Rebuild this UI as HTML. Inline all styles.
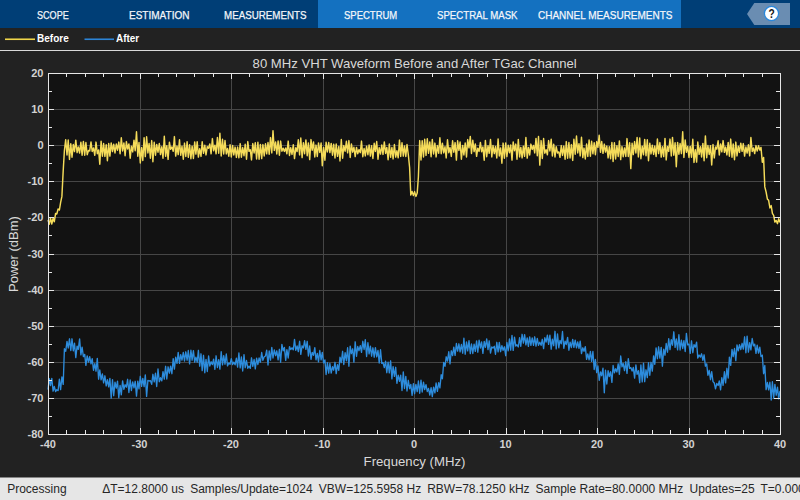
<!DOCTYPE html>
<html><head><meta charset="utf-8"><style>
html,body{margin:0;padding:0;}
body{width:800px;height:500px;overflow:hidden;position:relative;background:#222222;font-family:"Liberation Sans",sans-serif;}
.tb{position:absolute;left:0;top:0;width:800px;height:28px;background:#003e76;}
.sel{position:absolute;left:318px;top:0;width:363px;height:28px;background:#1471c0;}
.tab{position:absolute;top:8px;font-size:11px;line-height:14px;color:#f4f6fa;-webkit-text-stroke:0.25px #f4f6fa;white-space:nowrap;transform-origin:0 0;}
.leg{position:absolute;top:31px;font-size:11px;font-weight:bold;line-height:14px;color:#ffffff;white-space:nowrap;transform-origin:0 0;}
.status{position:absolute;left:0;top:477px;width:800px;height:22px;border-top:1px solid #858585;background:#e6e6e6;font-size:12px;color:#262626;white-space:pre;}
.status span{position:absolute;top:4px;line-height:14px;}
svg{position:absolute;left:0;top:0;}
</style></head><body>
<div class="tb"></div><div class="sel"></div>
<div class="tab" style="left:37px;transform:scaleX(0.824)">SCOPE</div>
<div class="tab" style="left:128.75px;transform:scaleX(0.911)">ESTIMATION</div>
<div class="tab" style="left:223.75px;transform:scaleX(0.888)">MEASUREMENTS</div>
<div class="tab" style="left:344.25px;transform:scaleX(0.863)">SPECTRUM</div>
<div class="tab" style="left:437px;transform:scaleX(0.876)">SPECTRAL MASK</div>
<div class="tab" style="left:538px;transform:scaleX(0.908)">CHANNEL MEASUREMENTS</div>

<svg width="800" height="28" viewBox="0 0 800 28">
<path d="M747 14L754.3 3H790V25H754.3Z" fill="#6a8db2"/>
<circle cx="771.5" cy="13.5" r="7.1" fill="#ffffff" stroke="#2a88dc" stroke-width="1.3"/>
<text x="771.6" y="17.8" text-anchor="middle" font-family="Liberation Sans" font-weight="bold" font-size="12" fill="#151515" transform="translate(771.6,0) scale(0.85,1) translate(-771.6,0)">?</text>
</svg>
<svg width="800" height="50" viewBox="0 0 800 50">
<path d="M5 39.25H35" stroke="#f0d64a" stroke-width="1.6"/>
<path d="M84.5 39.25H114" stroke="#2c84d6" stroke-width="1.6"/>
</svg>
<div class="leg" style="left:37px;transform:scaleX(0.91)">Before</div>
<div class="leg" style="left:116.25px;transform:scaleX(0.90)">After</div>
<div style="position:absolute;left:0;top:50px;width:800px;height:1px;background:#d9d9d9"></div>
<svg width="800" height="477" viewBox="0 0 800 477" style="top:0">
<rect x="48.5" y="73.5" width="732" height="361" fill="#121212"/>
<path d="M140.5 73V434M231.5 73V434M323.5 73V434M414.5 73V434M506.5 73V434M597.5 73V434M689.5 73V434M48 109.5H780M48 145.5H780M48 181.5H780M48 217.5H780M48 254.5H780M48 290.5H780M48 326.5H780M48 362.5H780M48 398.5H780" stroke="#464646" stroke-width="1" fill="none"/>
<path d="M48.0 220.1L49.3 224.2L50.5 217.9L51.8 224.0L53.1 218.3L54.3 221.7L55.6 213.4L56.8 214.0L58.1 209.0L59.4 210.0L60.6 202.6L61.9 196.4L63.2 170.7L64.4 150.5L65.7 139.7L67.0 155.0L68.2 140.0L69.5 159.4L70.8 143.8L72.0 157.2L73.3 144.5L74.5 151.6L75.8 140.2L77.1 152.6L78.3 146.9L79.6 153.0L80.9 142.2L82.1 155.3L83.4 141.4L84.7 155.2L85.9 142.5L87.2 154.7L88.5 150.5L89.7 150.9L91.0 141.9L92.2 151.5L93.5 147.9L94.8 155.3L96.0 142.1L97.3 153.7L98.6 149.9L99.8 164.2L101.1 141.3L102.4 156.3L103.6 143.5L104.9 156.4L106.2 144.8L107.4 160.8L108.7 143.5L109.9 156.1L111.2 142.9L112.5 151.6L113.7 144.2L115.0 153.0L116.3 144.0L117.5 150.2L118.8 142.1L120.1 153.7L121.3 137.7L122.6 151.0L123.9 142.9L125.1 155.7L126.4 141.6L127.6 149.0L128.9 143.9L130.2 158.2L131.4 146.2L132.7 151.9L134.0 140.2L135.2 150.7L136.5 131.8L137.8 156.3L139.0 142.5L140.3 163.0L141.6 147.6L142.8 160.5L144.1 137.8L145.3 156.6L146.6 136.7L147.9 152.9L149.1 143.5L150.4 158.3L151.7 140.6L152.9 161.7L154.2 142.3L155.5 155.2L156.7 144.4L158.0 152.2L159.3 143.5L160.5 154.6L161.8 146.8L163.0 158.2L164.3 136.3L165.6 156.3L166.8 145.7L168.1 159.4L169.4 142.2L170.6 149.3L171.9 146.9L173.2 151.3L174.4 136.6L175.7 156.1L177.0 146.1L178.2 154.6L179.5 139.7L180.7 155.3L182.0 146.3L183.3 159.2L184.5 143.1L185.8 156.4L187.1 141.8L188.3 157.3L189.6 144.8L190.9 158.7L192.1 146.2L193.4 158.5L194.7 141.9L195.9 154.1L197.2 141.7L198.4 157.1L199.7 148.8L201.0 156.4L202.2 141.8L203.5 153.3L204.8 145.3L206.0 154.9L207.3 146.6L208.6 148.2L209.8 143.9L211.1 153.8L212.4 138.6L213.6 150.8L214.9 145.2L216.1 153.8L217.4 137.5L218.7 153.2L219.9 133.3L221.2 156.0L222.5 139.2L223.7 154.0L225.0 140.5L226.3 153.9L227.5 148.5L228.8 156.2L230.1 144.7L231.3 157.0L232.6 145.4L233.8 155.0L235.1 147.1L236.4 157.4L237.6 147.1L238.9 157.8L240.2 143.6L241.4 157.2L242.7 147.6L244.0 155.7L245.2 144.3L246.5 159.2L247.8 141.6L249.0 151.3L250.3 149.7L251.5 159.9L252.8 143.6L254.1 153.0L255.3 142.7L256.6 159.0L257.9 142.2L259.1 159.3L260.4 144.4L261.7 158.6L262.9 144.6L264.2 156.0L265.5 143.8L266.7 153.8L268.0 142.5L269.2 154.2L270.5 137.6L271.8 152.9L273.0 130.8L274.3 150.4L275.6 142.0L276.8 154.0L278.1 140.9L279.4 155.2L280.6 141.1L281.9 151.2L283.2 148.2L284.4 151.4L285.7 147.9L286.9 153.8L288.2 141.1L289.5 155.5L290.7 147.7L292.0 154.4L293.3 144.7L294.5 158.6L295.8 147.8L297.1 151.5L298.3 139.8L299.6 154.9L300.8 138.0L302.1 157.6L303.4 142.7L304.6 153.7L305.9 139.9L307.2 155.7L308.4 142.9L309.7 159.6L311.0 139.6L312.2 150.2L313.5 141.9L314.8 157.0L316.0 145.1L317.3 156.5L318.5 142.9L319.8 152.4L321.1 143.0L322.3 165.7L323.6 147.4L324.9 160.2L326.1 142.3L327.4 151.9L328.7 142.5L329.9 152.6L331.2 143.4L332.5 155.2L333.7 144.2L335.0 158.0L336.2 144.0L337.5 156.3L338.8 146.5L340.0 160.9L341.3 139.5L342.6 158.2L343.8 145.6L345.1 151.2L346.4 141.3L347.6 152.8L348.9 140.6L350.2 157.5L351.4 143.9L352.7 152.2L353.9 147.3L355.2 156.6L356.5 147.4L357.7 153.7L359.0 149.6L360.3 152.7L361.5 141.1L362.8 156.7L364.1 148.5L365.3 155.9L366.6 146.2L367.9 154.7L369.1 144.9L370.4 156.1L371.6 145.8L372.9 158.5L374.2 143.3L375.4 151.4L376.7 141.5L378.0 159.2L379.2 147.7L380.5 154.1L381.8 145.0L383.0 154.4L384.3 141.9L385.6 153.4L386.8 147.5L388.1 159.7L389.3 144.0L390.6 157.3L391.9 147.5L393.1 158.9L394.4 144.5L395.7 157.1L396.9 150.8L398.2 157.8L399.5 140.1L400.7 156.4L402.0 142.8L403.3 156.1L404.5 145.9L405.8 156.5L407.0 144.5L408.3 154.5L409.6 167.5L410.8 195.1L412.1 191.4L413.4 195.6L414.6 191.6L415.9 196.4L417.2 193.1L418.4 176.7L419.7 140.6L421.0 160.0L422.2 140.8L423.5 157.0L424.7 139.2L426.0 155.4L427.3 138.8L428.5 153.3L429.8 141.9L431.1 156.8L432.3 139.4L433.6 154.0L434.9 143.1L436.1 156.9L437.4 145.6L438.7 153.2L439.9 137.7L441.2 153.7L442.4 143.2L443.7 152.9L445.0 146.8L446.2 157.9L447.5 139.8L448.8 152.7L450.0 147.6L451.3 156.4L452.6 140.8L453.8 152.2L455.1 142.6L456.4 160.1L457.6 140.8L458.9 150.4L460.1 142.0L461.4 159.3L462.7 145.4L463.9 155.0L465.2 143.0L466.5 157.0L467.7 139.6L469.0 147.8L470.3 136.4L471.5 153.5L472.8 140.3L474.1 151.6L475.3 143.9L476.6 156.3L477.8 148.2L479.1 151.4L480.4 142.4L481.6 151.7L482.9 146.9L484.2 160.3L485.4 140.4L486.7 156.7L488.0 145.8L489.2 153.3L490.5 139.5L491.8 156.9L493.0 145.5L494.3 153.6L495.5 146.5L496.8 158.0L498.1 139.0L499.3 156.0L500.6 147.9L501.9 163.2L503.1 143.1L504.4 158.3L505.7 143.0L506.9 156.6L508.2 145.3L509.5 152.7L510.7 144.9L512.0 160.1L513.2 141.9L514.5 150.7L515.8 144.1L517.0 159.3L518.3 139.4L519.6 156.9L520.8 147.4L522.1 157.9L523.4 146.2L524.6 156.3L525.9 137.5L527.2 158.1L528.4 147.4L529.7 155.0L530.9 144.1L532.2 149.4L533.5 145.5L534.7 152.9L536.0 138.4L537.3 155.8L538.5 136.5L539.8 165.1L541.1 140.6L542.3 158.5L543.6 138.5L544.8 153.2L546.1 149.7L547.4 154.7L548.6 140.6L549.9 150.9L551.2 139.2L552.4 156.0L553.7 144.2L555.0 157.0L556.2 146.7L557.5 153.0L558.8 151.9L560.0 157.3L561.3 145.6L562.5 155.4L563.8 146.1L565.1 159.3L566.3 141.6L567.6 158.2L568.9 142.5L570.1 158.0L571.4 144.6L572.7 160.4L573.9 139.2L575.2 154.2L576.5 136.0L577.7 152.9L579.0 143.7L580.2 155.9L581.5 137.3L582.8 157.6L584.0 148.1L585.3 159.0L586.6 144.0L587.8 156.4L589.1 140.0L590.4 156.2L591.6 141.2L592.9 153.8L594.2 142.7L595.4 154.7L596.7 141.6L597.9 147.3L599.2 135.2L600.5 152.3L601.7 141.5L603.0 153.3L604.3 144.1L605.5 152.1L606.8 146.1L608.1 157.9L609.3 146.8L610.6 158.7L611.9 142.5L613.1 161.5L614.4 142.7L615.6 159.0L616.9 145.7L618.2 156.5L619.4 140.9L620.7 159.6L622.0 146.6L623.2 156.7L624.5 147.9L625.8 156.4L627.0 138.6L628.3 156.5L629.6 142.8L630.8 168.6L632.1 143.3L633.3 154.6L634.6 141.6L635.9 153.0L637.1 137.5L638.4 156.9L639.7 137.9L640.9 158.8L642.2 146.2L643.5 154.8L644.7 139.4L646.0 155.8L647.3 139.7L648.5 160.7L649.8 143.2L651.0 153.9L652.3 145.3L653.6 154.4L654.8 146.1L656.1 156.5L657.4 139.0L658.6 153.6L659.9 142.6L661.2 157.1L662.4 146.8L663.7 156.6L665.0 138.4L666.2 159.9L667.5 146.4L668.7 151.4L670.0 139.1L671.3 155.9L672.5 137.4L673.8 155.2L675.1 142.7L676.3 166.8L677.6 142.4L678.9 154.2L680.1 143.5L681.4 153.6L682.7 131.8L683.9 157.4L685.2 140.0L686.4 152.3L687.7 146.5L689.0 157.5L690.2 146.4L691.5 157.2L692.8 139.2L694.0 162.4L695.3 149.7L696.6 162.1L697.8 142.0L699.1 154.4L700.4 146.7L701.6 157.0L702.9 143.4L704.1 160.8L705.4 135.9L706.7 157.7L707.9 145.5L709.2 154.5L710.5 145.7L711.7 165.0L713.0 144.5L714.3 157.9L715.5 147.0L716.8 149.2L718.1 140.8L719.3 155.0L720.6 143.9L721.8 151.8L723.1 140.6L724.4 152.3L725.6 147.1L726.9 154.9L728.2 142.4L729.4 156.2L730.7 139.1L732.0 157.2L733.2 144.0L734.5 159.8L735.8 142.1L737.0 155.9L738.3 146.2L739.5 152.4L740.8 143.2L742.1 151.3L743.3 143.6L744.6 156.1L745.9 147.0L747.1 153.1L748.4 144.8L749.7 155.8L750.9 137.5L752.2 151.5L753.5 148.0L754.7 153.6L756.0 145.6L757.2 151.1L758.5 145.8L759.8 150.1L761.0 147.4L762.3 162.3L763.6 157.4L764.8 186.9L766.1 192.0L767.4 199.1L768.6 200.2L769.9 208.0L771.2 205.6L772.4 213.3L773.7 215.5L774.9 222.1L776.2 220.4L777.5 223.7L778.7 218.7L780.0 222.6" fill="none" stroke="#f5dc5a" stroke-width="1.45" stroke-linejoin="round"/>
<path d="M48.0 389.5L49.3 378.7L50.5 385.6L51.8 378.4L53.1 391.2L54.3 386.5L55.6 391.6L56.8 389.7L58.1 390.6L59.4 379.2L60.6 389.6L61.9 376.9L63.2 384.4L64.4 348.7L65.7 351.3L67.0 341.4L68.2 348.0L69.5 338.8L70.8 350.5L72.0 338.8L73.3 350.8L74.5 343.1L75.8 357.6L77.1 346.1L78.3 349.4L79.6 338.9L80.9 354.9L82.1 347.2L83.4 356.6L84.7 354.4L85.9 365.4L87.2 355.9L88.5 362.1L89.7 356.6L91.0 363.8L92.2 358.6L93.5 370.3L94.8 363.6L96.0 371.2L97.3 358.4L98.6 379.2L99.8 370.0L101.1 379.8L102.4 374.0L103.6 382.9L104.9 375.8L106.2 385.8L107.4 379.6L108.7 386.9L109.9 378.4L111.2 398.1L112.5 379.6L113.7 395.7L115.0 382.1L116.3 388.2L117.5 381.1L118.8 397.8L120.1 385.4L121.3 394.8L122.6 380.9L123.9 389.4L125.1 384.7L126.4 387.2L127.6 379.3L128.9 392.5L130.2 380.0L131.4 390.5L132.7 381.9L134.0 387.8L135.2 381.3L136.5 396.1L137.8 381.1L139.0 388.9L140.3 376.3L141.6 386.4L142.8 378.4L144.1 386.6L145.3 374.9L146.6 396.4L147.9 380.4L149.1 381.0L150.4 380.6L151.7 384.4L152.9 374.3L154.2 381.8L155.5 373.2L156.7 386.5L158.0 369.0L159.3 381.7L160.5 377.7L161.8 380.9L163.0 371.7L164.3 379.1L165.6 366.3L166.8 379.0L168.1 366.8L169.4 373.2L170.6 366.1L171.9 373.7L173.2 358.6L174.4 369.1L175.7 357.1L177.0 363.4L178.2 352.4L179.5 363.3L180.7 354.6L182.0 360.2L183.3 352.4L184.5 361.0L185.8 351.8L187.1 360.2L188.3 350.5L189.6 363.9L190.9 350.2L192.1 360.2L193.4 350.7L194.7 362.2L195.9 357.1L197.2 362.2L198.4 350.3L199.7 366.2L201.0 353.8L202.2 370.6L203.5 355.3L204.8 372.8L206.0 359.4L207.3 371.5L208.6 356.0L209.8 366.0L211.1 361.7L212.4 364.6L213.6 359.2L214.9 369.3L216.1 355.8L217.4 367.5L218.7 359.7L219.9 369.1L221.2 351.7L222.5 364.9L223.7 355.6L225.0 364.2L226.3 354.0L227.5 365.9L228.8 363.0L230.1 364.2L231.3 358.6L232.6 364.5L233.8 362.1L235.1 364.8L236.4 358.2L237.6 367.1L238.9 353.0L240.2 367.9L241.4 357.0L242.7 371.0L244.0 354.6L245.2 367.7L246.5 360.5L247.8 368.3L249.0 366.1L250.3 368.3L251.5 357.8L252.8 366.4L254.1 359.5L255.3 368.9L256.6 358.1L257.9 364.5L259.1 357.9L260.4 362.2L261.7 352.5L262.9 360.3L264.2 356.8L265.5 356.0L266.7 350.1L268.0 365.0L269.2 350.9L270.5 360.1L271.8 347.4L273.0 358.0L274.3 349.9L275.6 355.7L276.8 350.8L278.1 359.9L279.4 349.3L280.6 362.3L281.9 344.4L283.2 350.8L284.4 347.4L285.7 360.4L286.9 349.6L288.2 358.0L289.5 346.6L290.7 349.6L292.0 347.8L293.3 349.8L294.5 339.4L295.8 350.4L297.1 345.9L298.3 351.6L299.6 341.3L300.8 354.4L302.1 345.8L303.4 348.0L304.6 340.6L305.9 349.3L307.2 341.3L308.4 356.0L309.7 346.0L311.0 359.3L312.2 352.4L313.5 355.3L314.8 347.6L316.0 359.8L317.3 353.4L318.5 361.8L319.8 350.5L321.1 359.9L322.3 352.4L323.6 362.9L324.9 359.9L326.1 374.5L327.4 362.7L328.7 373.1L329.9 363.5L331.2 373.1L332.5 366.6L333.7 370.2L335.0 362.3L336.2 373.6L337.5 364.7L338.8 370.3L340.0 357.1L341.3 362.5L342.6 351.3L343.8 364.5L345.1 352.7L346.4 360.7L347.6 347.7L348.9 366.2L350.2 346.1L351.4 353.7L352.7 348.8L353.9 362.2L355.2 341.8L356.5 356.3L357.7 346.5L359.0 350.7L360.3 345.7L361.5 352.4L362.8 341.3L364.1 349.5L365.3 339.7L366.6 356.5L367.9 342.6L369.1 353.9L370.4 346.2L371.6 356.2L372.9 347.8L374.2 357.2L375.4 347.6L376.7 356.9L378.0 350.5L379.2 363.0L380.5 349.7L381.8 363.4L383.0 362.6L384.3 367.5L385.6 361.2L386.8 372.7L388.1 362.1L389.3 372.9L390.6 360.8L391.9 378.9L393.1 366.6L394.4 376.3L395.7 367.3L396.9 383.3L398.2 375.2L399.5 381.4L400.7 375.2L402.0 390.5L403.3 371.9L404.5 388.5L405.8 376.4L407.0 391.0L408.3 380.3L409.6 388.7L410.8 384.4L412.1 395.4L413.4 383.6L414.6 393.7L415.9 384.4L417.2 391.6L418.4 381.0L419.7 393.3L421.0 380.1L422.2 392.0L423.5 382.1L424.7 389.6L426.0 384.6L427.3 391.6L428.5 388.4L429.8 395.1L431.1 387.7L432.3 396.6L433.6 387.2L434.9 392.9L436.1 383.0L437.4 391.4L438.7 382.6L439.9 387.9L441.2 374.7L442.4 378.7L443.7 362.4L445.0 366.3L446.2 356.8L447.5 361.1L448.8 351.7L450.0 363.9L451.3 350.8L452.6 355.6L453.8 347.1L455.1 355.4L456.4 343.5L457.6 351.1L458.9 343.8L460.1 351.9L461.4 344.5L462.7 353.2L463.9 338.2L465.2 354.2L466.5 341.9L467.7 350.9L469.0 340.6L470.3 353.6L471.5 344.0L472.8 353.5L474.1 344.2L475.3 351.4L476.6 340.9L477.8 352.2L479.1 340.2L480.4 348.0L481.6 341.9L482.9 353.4L484.2 341.5L485.4 347.4L486.7 338.9L488.0 349.6L489.2 340.8L490.5 353.1L491.8 346.9L493.0 348.0L494.3 346.3L495.5 354.3L496.8 342.3L498.1 351.9L499.3 342.4L500.6 351.7L501.9 345.7L503.1 350.3L504.4 346.8L505.7 355.7L506.9 342.5L508.2 350.8L509.5 338.9L510.7 350.1L512.0 335.4L513.2 350.4L514.5 337.1L515.8 346.1L517.0 344.8L518.3 347.0L519.6 337.7L520.8 346.3L522.1 334.3L523.4 343.1L524.6 334.6L525.9 344.8L527.2 337.9L528.4 346.4L529.7 336.9L530.9 345.3L532.2 337.9L533.5 345.3L534.7 336.8L536.0 346.1L537.3 338.4L538.5 345.3L539.8 342.2L541.1 345.3L542.3 339.3L543.6 348.6L544.8 337.7L546.1 342.1L547.4 335.2L548.6 344.3L549.9 335.1L551.2 349.2L552.4 339.2L553.7 345.7L555.0 331.3L556.2 348.9L557.5 333.9L558.8 347.8L560.0 340.4L561.3 343.8L562.5 331.5L563.8 348.3L565.1 341.2L566.3 344.5L567.6 337.4L568.9 350.2L570.1 342.2L571.4 347.5L572.7 339.4L573.9 347.4L575.2 340.1L576.5 347.8L577.7 342.0L579.0 348.3L580.2 341.2L581.5 353.6L582.8 347.8L584.0 351.3L585.3 346.6L586.6 359.4L587.8 353.9L589.1 359.8L590.4 351.4L591.6 361.4L592.9 351.5L594.2 369.5L595.4 359.5L596.7 372.6L597.9 366.0L599.2 380.3L600.5 371.9L601.7 375.7L603.0 368.2L604.3 392.8L605.5 370.2L606.8 384.0L608.1 370.6L609.3 376.6L610.6 371.8L611.9 382.4L613.1 365.5L614.4 372.8L615.6 368.8L616.9 372.0L618.2 363.8L619.4 374.3L620.7 356.0L622.0 366.8L623.2 363.5L624.5 370.6L625.8 361.7L627.0 373.4L628.3 358.6L629.6 368.4L630.8 367.6L632.1 371.1L633.3 367.5L634.6 378.1L635.9 364.9L637.1 374.4L638.4 370.6L639.7 382.7L640.9 365.0L642.2 381.9L643.5 363.1L644.7 381.7L646.0 369.8L647.3 377.6L648.5 362.7L649.8 375.3L651.0 362.3L652.3 371.1L653.6 355.9L654.8 364.3L656.1 347.9L657.4 358.7L658.6 346.8L659.9 358.1L661.2 347.4L662.4 366.2L663.7 349.2L665.0 355.2L666.2 343.5L667.5 352.2L668.7 338.7L670.0 349.6L671.3 339.6L672.5 345.2L673.8 331.8L675.1 347.4L676.3 339.0L677.6 349.9L678.9 334.7L680.1 350.0L681.4 340.2L682.7 348.5L683.9 340.7L685.2 351.5L686.4 333.4L687.7 344.8L689.0 344.2L690.2 353.4L691.5 340.8L692.8 352.7L694.0 344.6L695.3 347.2L696.6 342.1L697.8 358.1L699.1 355.0L700.4 357.1L701.6 353.8L702.9 360.3L704.1 354.8L705.4 366.2L706.7 363.9L707.9 375.3L709.2 370.3L710.5 379.7L711.7 371.7L713.0 381.6L714.3 383.0L715.5 388.9L716.8 383.5L718.1 385.5L719.3 381.0L720.6 389.8L721.8 377.7L723.1 385.3L724.4 371.7L725.6 382.9L726.9 368.3L728.2 378.0L729.4 357.1L730.7 365.4L732.0 349.4L733.2 356.6L734.5 348.5L735.8 360.6L737.0 344.9L738.3 350.9L739.5 344.7L740.8 349.5L742.1 343.3L743.3 349.1L744.6 336.8L745.9 352.8L747.1 336.1L748.4 352.1L749.7 342.7L750.9 349.9L752.2 338.5L753.5 345.9L754.7 344.1L756.0 353.4L757.2 345.2L758.5 353.1L759.8 347.1L761.0 356.5L762.3 355.1L763.6 373.7L764.8 365.5L766.1 389.6L767.4 382.5L768.6 389.8L769.9 382.2L771.2 400.0L772.4 381.7L773.7 398.2L774.9 384.4L776.2 395.2L777.5 387.2L778.7 398.9L780.0 390.8" fill="none" stroke="#2d8cdc" stroke-width="1.35" stroke-linejoin="round"/>
<path d="M48.5 434v-6M48.5 73v6M66.5 434v-4M66.5 73v4M85.5 434v-4M85.5 73v4M103.5 434v-4M103.5 73v4M121.5 434v-4M121.5 73v4M140.5 434v-6M140.5 73v6M158.5 434v-4M158.5 73v4M176.5 434v-4M176.5 73v4M194.5 434v-4M194.5 73v4M213.5 434v-4M213.5 73v4M231.5 434v-6M231.5 73v6M249.5 434v-4M249.5 73v4M268.5 434v-4M268.5 73v4M286.5 434v-4M286.5 73v4M304.5 434v-4M304.5 73v4M323.5 434v-6M323.5 73v6M341.5 434v-4M341.5 73v4M359.5 434v-4M359.5 73v4M377.5 434v-4M377.5 73v4M396.5 434v-4M396.5 73v4M414.5 434v-6M414.5 73v6M432.5 434v-4M432.5 73v4M451.5 434v-4M451.5 73v4M469.5 434v-4M469.5 73v4M487.5 434v-4M487.5 73v4M506.5 434v-6M506.5 73v6M524.5 434v-4M524.5 73v4M542.5 434v-4M542.5 73v4M560.5 434v-4M560.5 73v4M579.5 434v-4M579.5 73v4M597.5 434v-6M597.5 73v6M615.5 434v-4M615.5 73v4M634.5 434v-4M634.5 73v4M652.5 434v-4M652.5 73v4M670.5 434v-4M670.5 73v4M689.5 434v-6M689.5 73v6M707.5 434v-4M707.5 73v4M725.5 434v-4M725.5 73v4M743.5 434v-4M743.5 73v4M762.5 434v-4M762.5 73v4M780.5 434v-6M780.5 73v6M48 434.5h6M780 434.5h-6M48 416.5h4M780 416.5h-4M48 398.5h6M780 398.5h-6M48 380.5h4M780 380.5h-4M48 362.5h6M780 362.5h-6M48 344.5h4M780 344.5h-4M48 326.5h6M780 326.5h-6M48 308.5h4M780 308.5h-4M48 290.5h6M780 290.5h-6M48 272.5h4M780 272.5h-4M48 254.5h6M780 254.5h-6M48 235.5h4M780 235.5h-4M48 217.5h6M780 217.5h-6M48 199.5h4M780 199.5h-4M48 181.5h6M780 181.5h-6M48 163.5h4M780 163.5h-4M48 145.5h6M780 145.5h-6M48 127.5h4M780 127.5h-4M48 109.5h6M780 109.5h-6M48 91.5h4M780 91.5h-4M48 73.5h6M780 73.5h-6" stroke="#e6e6e6" stroke-width="1" fill="none"/>
<rect x="48.5" y="73.5" width="732" height="361" fill="none" stroke="#e6e6e6" stroke-width="1"/>
<g font-family="Liberation Sans" font-size="11" font-weight="bold" fill="#d2d2d2"><text x="48.0" y="448" text-anchor="middle">-40</text><text x="139.5" y="448" text-anchor="middle">-30</text><text x="231.0" y="448" text-anchor="middle">-20</text><text x="322.5" y="448" text-anchor="middle">-10</text><text x="414.0" y="448" text-anchor="middle">0</text><text x="505.5" y="448" text-anchor="middle">10</text><text x="597.0" y="448" text-anchor="middle">20</text><text x="688.5" y="448" text-anchor="middle">30</text><text x="780.0" y="448" text-anchor="middle">40</text><text x="43.5" y="438.0" text-anchor="end">-80</text><text x="43.5" y="401.9" text-anchor="end">-70</text><text x="43.5" y="365.8" text-anchor="end">-60</text><text x="43.5" y="329.7" text-anchor="end">-50</text><text x="43.5" y="293.6" text-anchor="end">-40</text><text x="43.5" y="257.5" text-anchor="end">-30</text><text x="43.5" y="221.4" text-anchor="end">-20</text><text x="43.5" y="185.3" text-anchor="end">-10</text><text x="43.5" y="149.2" text-anchor="end">0</text><text x="43.5" y="113.1" text-anchor="end">10</text><text x="43.5" y="77.0" text-anchor="end">20</text></g>
<text x="252.6" y="67.5" textLength="324.2" lengthAdjust="spacingAndGlyphs" font-family="Liberation Sans" font-size="13.5" fill="#d9d9d9">80 MHz VHT Waveform Before and After TGac Channel</text>
<text x="363.6" y="465.8" textLength="101.8" lengthAdjust="spacingAndGlyphs" font-family="Liberation Sans" font-size="13.5" fill="#d9d9d9">Frequency (MHz)</text>
<text transform="translate(17.5,254) rotate(-90)" text-anchor="middle" font-family="Liberation Sans" font-size="13" fill="#d9d9d9">Power (dBm)</text>
</svg>
<div class="status">
<span style="left:7.2px">Processing</span>
<span style="left:102.2px">ΔT=12.8000 us</span>
<span style="left:190.2px">Samples/Update=1024</span>
<span style="left:318.8px">VBW=125.5958 Hz</span>
<span style="left:427.2px">RBW=78.1250 kHz</span>
<span style="left:535.5px">Sample Rate=80.0000 MHz</span>
<span style="left:689.6px">Updates=25</span>
<span style="left:760.4px">T=0.0000</span>
</div>
</body></html>
